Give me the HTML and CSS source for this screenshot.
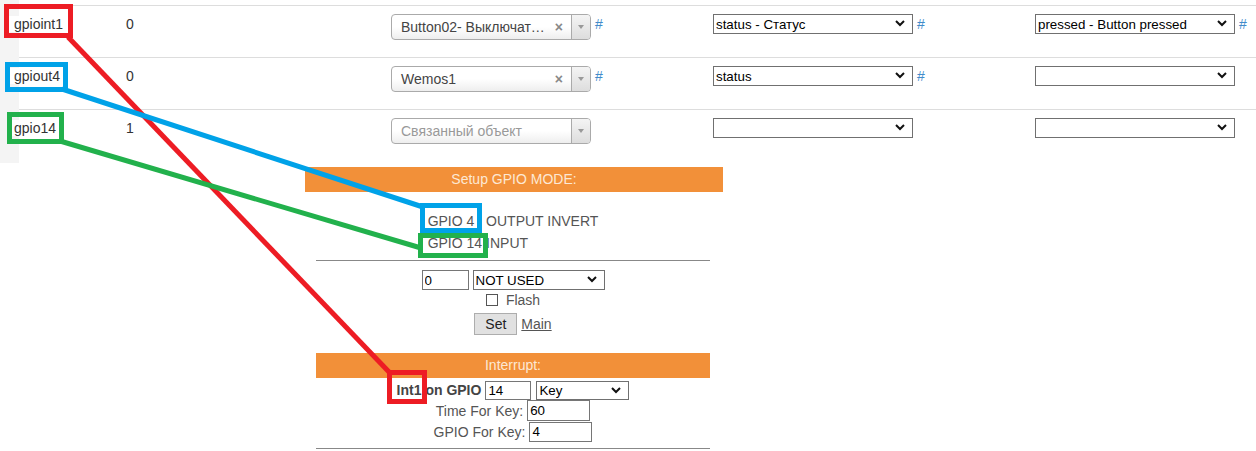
FILE: index.html
```html
<!DOCTYPE html>
<html lang="ru">
<head>
    <meta charset="UTF-8">
    <meta name="viewport" content="width=device-width, initial-scale=1.0">
    <title>GPIO - привязка объектов</title>
    <link rel="stylesheet" href="styles.css">
</head>
<body>
    <!-- таблица объектов -->
    <div class="devices">
        <div class="side"></div>
        <div class="list">
            <div class="row">
                <div class="name"><span>gpioint1</span></div>
                <div class="val">0</div>
                <div class="cell">
                    <div class="s2">
                        <span class="s2-text">Button02- Выключат…</span>
                        <span class="s2-clear">×</span>
                        <span class="s2-arrow"><b></b></span>
                    </div>
                    <a class="hash" href="#">#</a>
                </div>
                <div class="cell">
                    <span class="sel"><select class="sel-wide"><option>status - Статус</option></select><svg class="chev" width="10" height="7" viewBox="0 0 10 7"><path d="M1 1L5 5L9 1"/></svg></span>
                    <a class="hash" href="#">#</a>
                </div>
                <div class="cell">
                    <span class="sel"><select class="sel-wide"><option>pressed - Button pressed</option></select><svg class="chev" width="10" height="7" viewBox="0 0 10 7"><path d="M1 1L5 5L9 1"/></svg></span>
                    <a class="hash" href="#">#</a>
                </div>
            </div>
            <div class="row">
                <div class="name"><span>gpiout4</span></div>
                <div class="val">0</div>
                <div class="cell">
                    <div class="s2">
                        <span class="s2-text">Wemos1</span>
                        <span class="s2-clear">×</span>
                        <span class="s2-arrow"><b></b></span>
                    </div>
                    <a class="hash" href="#">#</a>
                </div>
                <div class="cell">
                    <span class="sel"><select class="sel-wide"><option>status</option></select><svg class="chev" width="10" height="7" viewBox="0 0 10 7"><path d="M1 1L5 5L9 1"/></svg></span>
                    <a class="hash" href="#">#</a>
                </div>
                <div class="cell">
                    <span class="sel"><select class="sel-wide"><option></option></select><svg class="chev" width="10" height="7" viewBox="0 0 10 7"><path d="M1 1L5 5L9 1"/></svg></span>
                </div>
            </div>
            <div class="row">
                <div class="name"><span>gpio14</span></div>
                <div class="val">1</div>
                <div class="cell">
                    <div class="s2 s2-empty">
                        <span class="s2-text">Связанный объект</span>
                        <span class="s2-arrow"><b></b></span>
                    </div>
                </div>
                <div class="cell">
                    <span class="sel"><select class="sel-wide"><option></option></select><svg class="chev" width="10" height="7" viewBox="0 0 10 7"><path d="M1 1L5 5L9 1"/></svg></span>
                </div>
                <div class="cell">
                    <span class="sel"><select class="sel-wide"><option></option></select><svg class="chev" width="10" height="7" viewBox="0 0 10 7"><path d="M1 1L5 5L9 1"/></svg></span>
                </div>
            </div>
        </div>
    </div>

    <!-- страница настройки модуля -->
    <div class="setup">
        <div class="bar">Setup GPIO MODE:</div>
        <div class="inner">
            <table class="modes">
                <tr><td>GPIO 4</td><td>OUTPUT INVERT</td></tr>
                <tr><td>GPIO 14</td><td>INPUT</td></tr>
            </table>
            <hr>
            <div class="line">
                <input class="num" type="text" value="0">
                <span class="sel"><select class="sel-mode"><option>NOT USED</option></select><svg class="chev" width="10" height="7" viewBox="0 0 10 7"><path d="M1 1L5 5L9 1"/></svg></span>
            </div>
            <div class="line flash">
                <input class="check" type="checkbox">
                <span>Flash</span>
            </div>
            <div class="line buttons">
                <button class="btn">Set</button>
                <a class="main-link" href="#">Main</a>
            </div>
            <div class="bar bar-inner">Interrupt:</div>
            <div class="line int">
                <b>Int1 on GPIO</b>
                <input class="num" type="text" value="14">
                <span class="sel"><select class="sel-key"><option>Key</option></select><svg class="chev" width="10" height="7" viewBox="0 0 10 7"><path d="M1 1L5 5L9 1"/></svg></span>
            </div>
            <div class="line key">
                <span>Time For Key:</span>
                <input class="num num-key" type="text" value="60">
            </div>
            <div class="line key">
                <span>GPIO For Key:</span>
                <input class="num num-key" type="text" value="4">
            </div>
            <hr class="last">
        </div>
    </div>

    <!-- пометки поверх скриншота -->
    <svg class="marks" width="1256" height="451" viewBox="0 0 1256 451">
        <g fill="none" stroke-width="5">
            <g stroke="#ed1c24">
                <rect x="6.5" y="6.5" width="64" height="29"/>
                <line x1="68" y1="37" x2="390" y2="373"/>
                <rect x="389.5" y="372.5" width="35" height="29"/>
            </g>
            <g stroke="#00a2e8">
                <rect x="7.5" y="64.5" width="58" height="25"/>
                <line x1="62" y1="89" x2="423" y2="207"/>
                <rect x="422.5" y="205.5" width="57" height="25"/>
            </g>
            <g stroke="#22b14c">
                <rect x="9.5" y="114.5" width="52" height="27"/>
                <line x1="60" y1="141" x2="421" y2="248"/>
                <rect x="420.5" y="235.5" width="65" height="20"/>
            </g>
        </g>
    </svg>
</body>
</html>
```

FILE: styles.css
```css
body {
    margin: 0;
    width: 1256px;
    height: 451px;
    overflow: hidden;
    position: relative;
    background: #fff;
    font-family: "Liberation Sans", Arial, sans-serif;
    font-size: 14px;
    color: #333;
}

/* верхняя таблица */
.devices {
    display: flex;
    height: 163px;
}
.side {
    width: 19px;
    background: #f4f4f4;
}
.list {
    flex: 1;
    padding-top: 5px;
}
.row {
    display: grid;
    grid-template-columns: 107px 265px 322px 322px 1fr;
    height: 52px;
    box-sizing: border-box;
    border-top: 1px solid #ddd;
    padding-top: 8px;
    line-height: 20px;
}
.row:last-child {
    height: auto;
}
.name span {
    margin-left: -11px;
    padding: 0 6px;
    background: #fff;
}
.cell {
    display: flex;
    align-items: flex-start;
}
.hash {
    color: #428bca;
    text-decoration: none;
    margin-left: 4px;
}

.s2 {
    width: 200px;
    height: 26px;
    box-sizing: border-box;
    border: 1px solid #aaa;
    border-radius: 4px;
    display: flex;
    align-items: center;
    overflow: hidden;
    background: linear-gradient(to bottom, #fff 0%, #fff 50%, #eee 100%);
    color: #444;
}
.s2-text {
    flex: 1;
    padding-left: 9px;
    white-space: nowrap;
    overflow: hidden;
}
.s2-empty .s2-text {
    color: #999;
}
.s2-clear {
    color: #888;
    font-size: 14px;
    font-weight: bold;
    margin-right: 8px;
}
.s2-arrow {
    width: 18px;
    align-self: stretch;
    border-left: 1px solid #aaa;
    background: linear-gradient(to bottom, #f4f4f4 0%, #ddd 100%);
    display: flex;
    align-items: center;
    justify-content: center;
}
.s2-arrow b {
    width: 0;
    height: 0;
    border-left: 3px solid transparent;
    border-right: 3px solid transparent;
    border-top: 4px solid #999;
}

/* обычные списки */
.sel {
    position: relative;
    display: inline-block;
    line-height: normal;
}
.sel select {
    -webkit-appearance: none;
    appearance: none;
    display: block;
    box-sizing: border-box;
    height: 20px;
    margin: 0;
    padding: 0 18px 0 2px;
    border: 1px solid #707070;
    border-radius: 0;
    background: #fff;
    color: #000;
    font-family: "Liberation Sans", Arial, sans-serif;
    font-size: 13.333px;
}
.sel-wide {
    width: 200px;
}
.sel-mode {
    width: 132px;
}
.sel-key {
    width: 93px;
}
.chev {
    position: absolute;
    right: 8px;
    top: 6px;
    pointer-events: none;
}
.chev path {
    fill: none;
    stroke: #111;
    stroke-width: 2;
}

/* настройка GPIO */
.setup {
    margin-left: 305px;
    width: 418px;
    color: #555;
}
.bar {
    height: 25px;
    line-height: 25px;
    margin-top: 4px;
    background: #f29039;
    color: #fde8d4;
    text-align: center;
}
.inner {
    margin: 0 13px 0 11px;
}
.modes {
    margin: 17px auto 0;
    border-spacing: 2px;
}
.modes td {
    padding: 2px 1px;
    line-height: 16px;
}
hr {
    border: 0;
    border-top: 1px solid #888;
    margin: 5px 0 9px;
}
hr.last {
    margin: 6px 0 0;
}
.line {
    display: flex;
    justify-content: center;
    align-items: center;
    gap: 4px;
}
.num {
    box-sizing: border-box;
    width: 47px;
    height: 20px;
    margin: 0;
    padding: 0 2px;
    border: 1px solid #767676;
    font-family: "Liberation Sans", Arial, sans-serif;
    font-size: 13.333px;
    color: #000;
}
.flash {
    height: 20px;
    gap: 8px;
}
.check {
    -webkit-appearance: none;
    appearance: none;
    width: 12px;
    height: 12px;
    margin: 0;
    border: 1px solid #555;
    background: #fff;
}
.buttons {
    margin-top: 3px;
}
.btn {
    width: 43px;
    height: 22px;
    padding: 0;
    border: 1px solid #adadad;
    background: #e1e1e1;
    color: #222;
    font-family: "Liberation Sans", Arial, sans-serif;
    font-size: 14px;
}
.main-link {
    color: #555;
}
.bar-inner {
    margin-top: 18px;
}
.int {
    margin-top: 2px;
    height: 20px;
    color: #444;
}
.int .num {
    width: 46px;
    height: 19px;
}
.int .sel {
    margin-left: 1px;
}
.int .sel select {
    height: 19px;
}
.key {
    height: 21px;
}
.num-key {
    width: 63px;
    height: 21px;
}
.key + .key .num-key {
    height: 20px;
}

.marks {
    position: absolute;
    left: 0;
    top: 0;
    pointer-events: none;
}
```
